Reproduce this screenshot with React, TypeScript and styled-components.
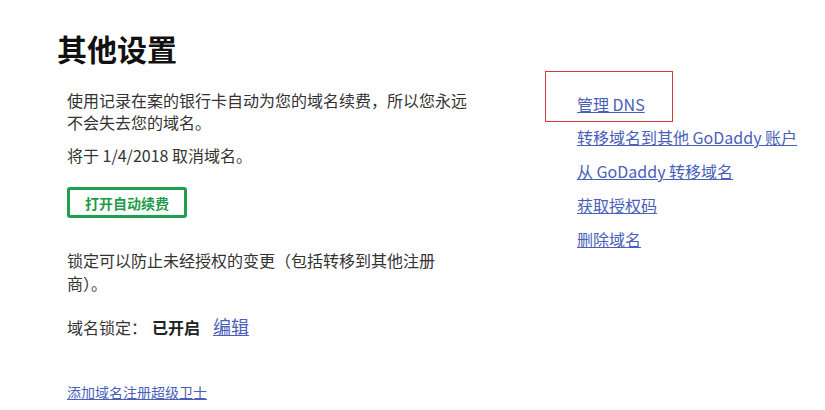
import styled, { createGlobalStyle, css } from "styled-components";

const GlobalStyle = createGlobalStyle`
  body {
    margin: 0;
    background: #fff;
    font-family: "Noto Sans CJK SC", "Noto Sans", sans-serif;
    color: #333;
  }
`;

const linkColor = "#4a60b8";

const Page = styled.div`
  display: flex;
  padding: 30px 0 0 57px;
  width: 825px;
  height: 410px;
  box-sizing: border-box;
  overflow: hidden;
`;

const MainColumn = styled.div`
  width: 488px;
  flex-shrink: 0;
`;

const Title = styled.h1`
  margin: 0;
  font-size: 30px;
  line-height: 36px;
  font-weight: 700;
  color: #111;
`;

const Section = styled.div`
  padding-left: 10px;
`;

const Paragraph = styled.p<{ $width?: number; $top: number; $lineHeight?: number }>`
  margin: ${({ $top }) => $top}px 0 0;
  max-width: ${({ $width }) => ($width ? `${$width}px` : "none")};
  font-size: 16px;
  line-height: ${({ $lineHeight }) => $lineHeight ?? 22}px;
`;

const OutlineButton = styled.button`
  display: block;
  margin-top: 21px;
  width: 120px;
  height: 31px;
  padding: 0;
  background: #fff;
  border: 3px solid #1fa04f;
  border-radius: 3px;
  color: #1e9a48;
  font-family: inherit;
  font-size: 14px;
  font-weight: 700;
  cursor: pointer;
`;

const LockRow = styled.div`
  display: flex;
  align-items: baseline;
  margin-top: 18px;
  font-size: 16px;
  line-height: 26px;
`;

const LockState = styled.strong`
  margin-left: 5px;
  font-weight: 700;
  color: #222;
`;

const Link = styled.a<{ $size?: number }>`
  color: ${linkColor};
  text-decoration: underline;
  font-size: ${({ $size }) => $size ?? 16}px;
  cursor: pointer;
`;

const EditLink = styled(Link)`
  margin-left: 13px;
`;

const FooterLink = styled.div`
  margin-top: 41px;
  line-height: 20px;
`;

const SideColumn = styled.ul`
  display: flex;
  flex-direction: column;
  align-items: flex-start;
  list-style: none;
  margin: 41px 0 0;
  padding: 0;
`;

const SideItem = styled.li<{ $active?: boolean }>`
  line-height: 34px;
  padding-left: 32px;
  ${({ $active }) =>
    $active &&
    css`
      width: 95px;
      padding-left: 31px;
      padding-top: 15px;
      margin-bottom: -2px;
      border: 1px solid #d6393b;
    `}
`;

const sideLinks = [
  "管理 DNS",
  "转移域名到其他 GoDaddy 账户",
  "从 GoDaddy 转移域名",
  "获取授权码",
  "删除域名",
];

export default function App() {
  return (
    <>
      <GlobalStyle />
      <Page>
        <MainColumn>
          <Title>其他设置</Title>
          <Section>
            <Paragraph $top={23} $width={405}>
              使用记录在案的银行卡自动为您的域名续费，所以您永远不会失去您的域名。
            </Paragraph>
            <Paragraph $top={11}>将于 1/4/2018 取消域名。</Paragraph>
            <OutlineButton>打开自动续费</OutlineButton>
            <Paragraph $top={31} $width={375} $lineHeight={23}>
              锁定可以防止未经授权的变更（包括转移到其他注册商）。
            </Paragraph>
            <LockRow>
              域名锁定：
              <LockState>已开启</LockState>
              <EditLink $size={18}>编辑</EditLink>
            </LockRow>
            <FooterLink>
              <Link $size={14}>添加域名注册超级卫士</Link>
            </FooterLink>
          </Section>
        </MainColumn>
        <SideColumn>
          {sideLinks.map((label, i) => (
            <SideItem key={label} $active={i === 0}>
              <Link>{label}</Link>
            </SideItem>
          ))}
        </SideColumn>
      </Page>
    </>
  );
}
